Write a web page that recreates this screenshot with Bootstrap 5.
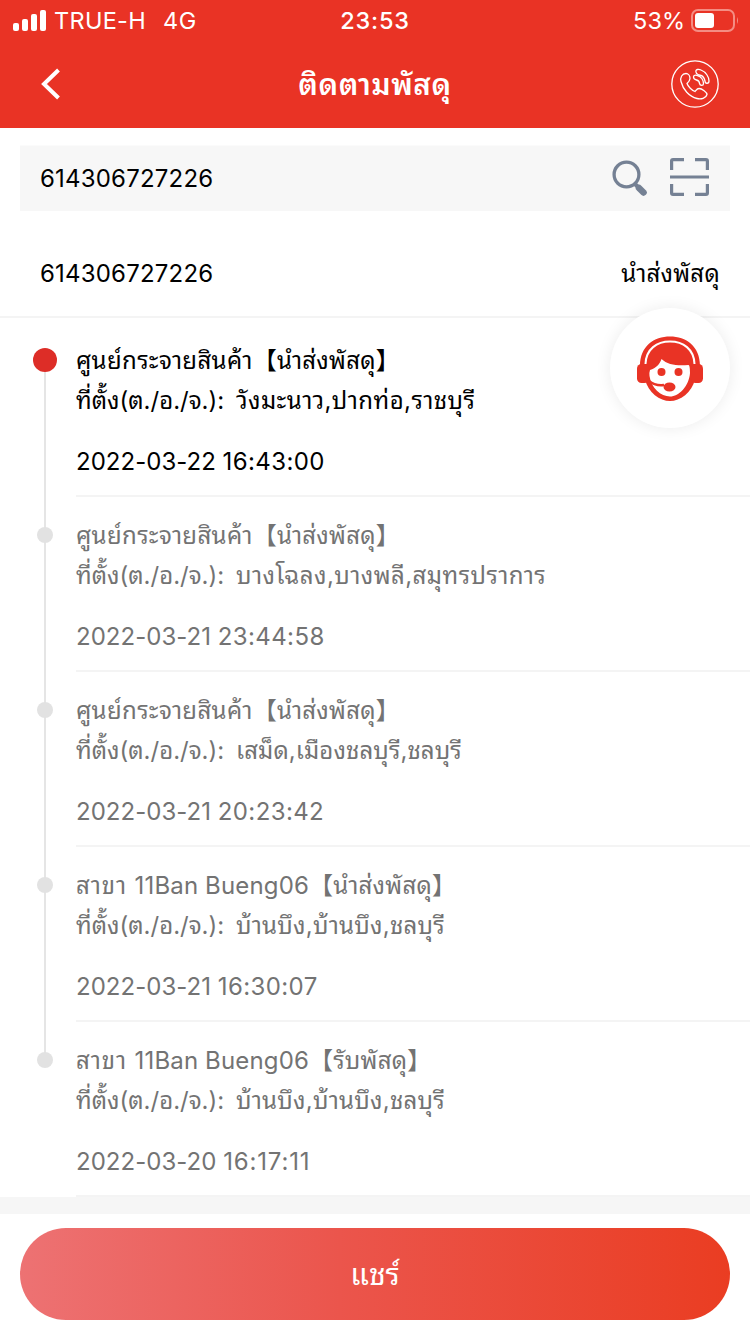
<!DOCTYPE html>
<html lang="th">
<head>
<meta charset="utf-8">
<meta name="viewport" content="width=device-width, initial-scale=1">
<title>ติดตามพัสดุ</title>
<link rel="stylesheet" href="https://cdn.jsdelivr.net/npm/bootstrap@5.3.0/dist/css/bootstrap.min.css">
<style>
body{font-family:Inter,"Noto Sans Thai Looped","Noto Looped Thai",Loma,Garuda,Waree,Umpush,"Noto Sans CJK SC",sans-serif;font-size:24px;line-height:40px;color:#000;background:#fff;width:750px;height:1334px;overflow:hidden}
svg{display:block;flex:none}
.topbar{background:#e93325;height:128px}
.status{height:40px;padding:1px 11px 0 13px;font-size:23.5px}
.carrier{letter-spacing:.3px}
.net{letter-spacing:.5px;padding-left:1px}
.clock{letter-spacing:.8px;font-weight:550;margin-left:-2px}
.appbar{height:88px;padding:0 31px 0 41px}
.grid3{display:grid;grid-template-columns:1fr auto 1fr}
.apptitle{font-size:29.500px;font-weight:600;letter-spacing:.6px;margin-left:-10px}
.searchbox{height:66px;margin:17px 20px 0;padding:1px 20px 0;background:#f7f7f7;border-top:1px solid #fbfbfb}
.num{letter-spacing:.2px}
.state{letter-spacing:.25px}
.summary{height:107px;padding:20px 30px 0 40px;border-bottom:2px solid #f4f4f4}
.steps{padding-top:4px}
.step{height:175px;color:#737373}
.rail{width:90px;position:relative;flex:none}
.rail::before{content:"";position:absolute;left:44px;top:0;bottom:0;width:2px;background:#e5e5e5}
.step:first-child .rail::before{top:38px}
.step:last-child .rail::before{bottom:137px}
.dot{position:absolute;left:37px;top:30px;width:16px;height:16px;border-radius:50%;background:#e2e2e2}
.step:first-child{color:#000}
.step:first-child .dot{left:33px;top:26px;width:24px;height:24px;background:#dd2d27}
.info{margin-left:-14px;padding-top:19px;border-bottom:2px solid #f4f4f4;white-space:nowrap}
.info>div{height:40px}
.info .when{margin-top:21px}
.place{letter-spacing:.35px}
.branch{letter-spacing:.9px}
.latin{letter-spacing:.15px}
.tag{letter-spacing:.25px}
.addr{letter-spacing:.45px}
.step:nth-child(3) .addr{letter-spacing:.1px}
.step:nth-child(n+4) .addr{letter-spacing:.25px}
.when .date{letter-spacing:.03px}
.when .time{letter-spacing:.4px}
.step:last-child .time{letter-spacing:.85px}
.loc{display:inline-block;width:160px}
.helper{position:absolute;left:610px;top:308px;width:120px;height:120px;background:#fff;box-shadow:0 0 16px rgba(0,0,0,.08)}
.band{height:17px;background:#f6f6f6}
.share{height:92px;margin:14px 20px 0;border-radius:46px;border:0;background:linear-gradient(90deg,#ed7273,#eb554c 45%,#ea3d22);color:#fff;font-size:30px;width:710px}
</style>
</head>
<body class="position-relative">
<header class="topbar text-white">
  <div class="status grid3 align-items-center">
    <div class="d-flex align-items-center">
      <svg width="33" height="22" viewBox="0 0 33 22" fill="#fff"><rect y="13" width="6" height="8" rx="2"/><rect x="9" y="9" width="6" height="12" rx="2"/><rect x="18" y="4" width="6" height="17" rx="2"/><rect x="27" y="0" width="6" height="21" rx="2"/></svg>
      <span class="carrier ms-2">TRUE-H</span><span class="net ms-3">4G</span>
    </div>
    <div class="clock">23:53</div>
    <div class="d-flex align-items-center justify-content-end">
      <span class="pct me-1">53%</span>
      <svg width="50" height="24" viewBox="0 0 50 24"><rect x="3" y="1" width="42" height="21" rx="6" fill="none" stroke="#f48d83" stroke-width="2"/><rect x="6" y="4" width="19" height="15" rx="3" fill="#fff"/><path d="M48 8q2 3.500 0 7z" fill="#f48d83"/></svg>
    </div>
  </div>
  <div class="appbar grid3 align-items-center">
    <svg width="20" height="32" viewBox="0 0 20 32"><path d="M17.500 2 3 16l14.500 14" fill="none" stroke="#fff" stroke-width="4"/></svg>
    <div class="apptitle">ติดตามพัสดุ</div>
    <svg class="ms-auto" width="48" height="48" viewBox="0 0 48 48" fill="none" stroke="#fff" stroke-width="1.300" stroke-linejoin="round" stroke-linecap="round"><circle cx="24" cy="24" r="23.200"/><path d="M15 13.500c-4 0-6 4-5 8 2 8 8 15 16 17 4 1 9 0 10-4 0-2-5-6-8-6-2 0-3 2-4 3-3-1-7-5-8-8 1-1 3-3 3-5 0-3-2-5-4-5z"/><path d="M25 12c-1-3 3-3 5-2 5 2 8 7 8 11 0 3-4 3-4 0-1-4-3-6-6-6-2-1-3-1-3-3z"/><path d="M22.500 17c0-2 2-2 4-1.500 4 1 6 5 6 8 0 2.500-3.500 2.500-4 0 0-2-1-3-3-3.500-2-.5-3-1.500-3-3z"/></svg>
  </div>
</header>
<div class="searchbox d-flex align-items-center">
  <span class="num me-auto">614306727226</span>
  <svg width="38" height="42" viewBox="0 0 38 42" fill="none" stroke="#758194"><circle cx="16.500" cy="16.500" r="12.400" stroke-width="3.300"/><path d="M25 26l3 3" stroke-width="4"/><path d="M29 30l4.500 4.500" stroke-width="6.500" stroke-linecap="round"/></svg>
  <svg class="ms-3 mb-1" width="46" height="40" viewBox="-6 0 46 40" fill="none" stroke="#758194" stroke-width="3.200"><path d="M1.600 13V4q0-1.400 1.400-1.400h11M25 2.600h11q1.400 0 1.400 1.400v9M1.600 27v9q0 1.400 1.400 1.400h11M25 37.400h11q1.400 0 1.400-1.400v-9M0 20h39"/></svg>
</div>
<div class="summary d-flex align-items-center justify-content-between">
  <span class="num">614306727226</span><span class="state">นำส่งพัสดุ</span>
</div>
<main class="steps">
  <section class="step d-flex"><div class="rail"><i class="dot"></i></div><div class="info flex-grow-1"><div><span class="place">ศูนย์กระจายสินค้า</span><span class="tag">【นำส่งพัสดุ】</span></div><div><span class="loc">ที่ตั้ง(ต./อ./จ.):</span><span class="addr">วังมะนาว,ปากท่อ,ราชบุรี</span></div><div class="when"><span class="date">2022-03-22</span> <span class="time">16:43:00</span></div></div></section>
  <section class="step d-flex"><div class="rail"><i class="dot"></i></div><div class="info flex-grow-1"><div><span class="place">ศูนย์กระจายสินค้า</span><span class="tag">【นำส่งพัสดุ】</span></div><div><span class="loc">ที่ตั้ง(ต./อ./จ.):</span><span class="addr">บางโฉลง,บางพลี,สมุทรปราการ</span></div><div class="when"><span class="date">2022-03-21</span> <span class="time">23:44:58</span></div></div></section>
  <section class="step d-flex"><div class="rail"><i class="dot"></i></div><div class="info flex-grow-1"><div><span class="place">ศูนย์กระจายสินค้า</span><span class="tag">【นำส่งพัสดุ】</span></div><div><span class="loc">ที่ตั้ง(ต./อ./จ.):</span><span class="addr">เสม็ด,เมืองชลบุรี,ชลบุรี</span></div><div class="when"><span class="date">2022-03-21</span> <span class="time">20:23:42</span></div></div></section>
  <section class="step d-flex"><div class="rail"><i class="dot"></i></div><div class="info flex-grow-1"><div><span class="branch">สาขา </span><span class="latin">11Ban Bueng06</span><span class="tag">【นำส่งพัสดุ】</span></div><div><span class="loc">ที่ตั้ง(ต./อ./จ.):</span><span class="addr">บ้านบึง,บ้านบึง,ชลบุรี</span></div><div class="when"><span class="date">2022-03-21</span> <span class="time">16:30:07</span></div></div></section>
  <section class="step d-flex"><div class="rail"><i class="dot"></i></div><div class="info flex-grow-1"><div><span class="branch">สาขา </span><span class="latin">11Ban Bueng06</span><span class="tag">【รับพัสดุ】</span></div><div><span class="loc">ที่ตั้ง(ต./อ./จ.):</span><span class="addr">บ้านบึง,บ้านบึง,ชลบุรี</span></div><div class="when"><span class="date">2022-03-20</span> <span class="time">16:17:11</span></div></div></section>
</main>
<div class="band"></div>
<button class="share d-flex align-items-center justify-content-center" type="button">แชร์</button>
<div class="helper rounded-circle d-flex align-items-center justify-content-center">
  <svg width="68" height="68" viewBox="0 0 68 68" fill="#e93325"><path d="M4 32C4 12 18 2.500 34 2.500S64 12 64 32l-5 13C56 59 44 67 34 67S12 59 9 45z"/><rect x="1" y="30" width="12" height="19" rx="4.500"/><rect x="55" y="30" width="12" height="19" rx="4.500"/><path d="M9.500 30C10 15 21 7.500 34 7.500S58 15 58.500 30" fill="none" stroke="#fff" stroke-width="2"/><path d="M14 36c6-2 10-6 11.500-11 6 6 16 7 27 6 1 0 1.500 3 1.500 8-1 13-11 23.500-20 23.500S15 54 13.500 42q-.3-4 .5-6z" fill="#fff"/><circle cx="25.500" cy="38" r="4"/><circle cx="42.500" cy="38" r="4"/><path d="M13 47q6 5 15 4" fill="none" stroke="#e93325" stroke-width="2.500"/><ellipse cx="33.500" cy="53" rx="6" ry="4.500"/></svg>
</div>
<script src="https://cdn.jsdelivr.net/npm/bootstrap@5.3.0/dist/js/bootstrap.bundle.min.js"></script>
</body>
</html>
